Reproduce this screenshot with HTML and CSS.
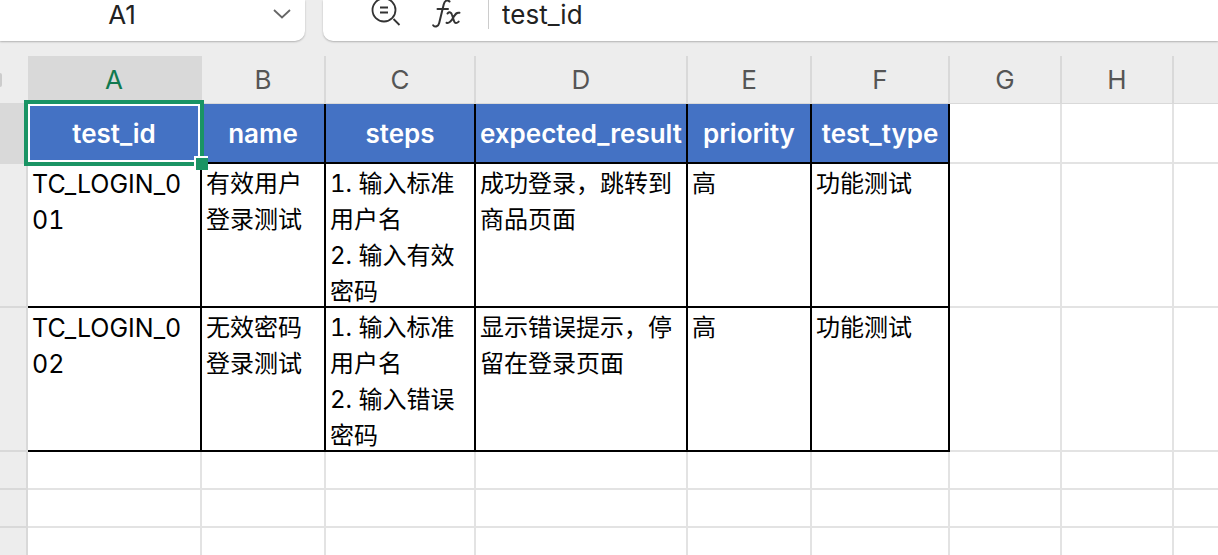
FILE: index.html
```
<!DOCTYPE html>
<html lang="zh-CN">
<head>
    <meta charset="UTF-8">
    <meta name="viewport" content="width=device-width, initial-scale=1.0">
    <title>测试用例</title>
    <link rel="stylesheet" href="styles.css">
</head>
<body>
    <!-- 名称框和编辑栏 -->
    <div class="toolbar">
        <div class="name-box">
            <input type="text" class="name-input" value="A1" aria-label="名称框">
            <button type="button" class="icon-btn" aria-label="展开名称列表">
                <svg width="20" height="12" viewBox="0 0 20 12"><path d="M2 2l8 7.500 8-7.500" fill="none" stroke="#666" stroke-width="1.800"/></svg>
            </button>
        </div>
        <div class="formula-bar">
            <button type="button" class="icon-btn" aria-label="查找">
                <svg width="32" height="32" viewBox="0 0 32 32" fill="none" stroke="#333" stroke-width="1.800">
                    <circle cx="14" cy="12" r="11.500"/>
                    <path d="M10 9.500h8M10 14.500h8M23.500 21l6 6"/>
                </svg>
            </button>
            <button type="button" class="icon-btn" aria-label="插入函数">
                <svg width="32" height="32" viewBox="0 -2 32 32" fill="none" stroke="#333" stroke-width="2" stroke-linecap="round">
                    <path d="M20.500 1.500c-1.500-1.800-4.800-1.500-5.800 3L10.200 23c-.8 3.500-4 4.500-6 2.300M8.500 9h10.500"/>
                    <path d="M18.500 13.500c2-2 3.800-1.200 4.500 1.200l2 6.300c.8 2.600 2.500 2.800 4.700.6M30.500 12.800c-3-.8-4.300 1.500-6 4.400s-3.700 6.800-7 5.600"/>
                </svg>
            </button>
            <input type="text" class="formula-input" value="test_id" aria-label="编辑栏">
        </div>
    </div>

    <table class="sheet">
        <colgroup>
            <col class="col-index">
            <col class="col-a">
            <col class="col-b">
            <col class="col-c">
            <col class="col-d">
            <col class="col-e">
            <col class="col-f">
            <col class="col-g">
            <col class="col-h">
            <col>
        </colgroup>
        <thead>
            <tr>
                <td class="corner"><span class="select-all"></span></td>
                <th class="active">A</th>
                <th>B</th>
                <th>C</th>
                <th>D</th>
                <th>E</th>
                <th>F</th>
                <th>G</th>
                <th>H</th>
                <th></th>
            </tr>
        </thead>
        <tbody>
            <tr class="title-row">
                <th class="index active"></th>
                <td class="title selected">test_id<span class="selection"></span><span class="fill-handle"></span></td>
                <td class="title">name</td>
                <td class="title">steps</td>
                <td class="title">expected_result</td>
                <td class="title">priority</td>
                <td class="title">test_type</td>
                <td></td>
                <td></td>
                <td></td>
            </tr>
            <tr class="data-row">
                <th class="index"></th>
                <td class="data"><div class="cell case-id">TC_LOGIN_001</div></td>
                <td class="data"><div class="cell">有效用户登录测试</div></td>
                <td class="data"><div class="cell">1. 输入标准用户名<br>2. 输入有效密码</div></td>
                <td class="data"><div class="cell">成功登录，跳转到商品页面</div></td>
                <td class="data"><div class="cell">高</div></td>
                <td class="data"><div class="cell">功能测试</div></td>
                <td></td>
                <td></td>
                <td></td>
            </tr>
            <tr class="data-row">
                <th class="index"></th>
                <td class="data"><div class="cell case-id">TC_LOGIN_002</div></td>
                <td class="data"><div class="cell">无效密码登录测试</div></td>
                <td class="data"><div class="cell">1. 输入标准用户名<br>2. 输入错误密码</div></td>
                <td class="data"><div class="cell">显示错误提示，停留在登录页面</div></td>
                <td class="data"><div class="cell">高</div></td>
                <td class="data"><div class="cell">功能测试</div></td>
                <td></td>
                <td></td>
                <td></td>
            </tr>
            <tr class="empty-row">
                <th class="index"></th>
                <td></td><td></td><td></td><td></td><td></td><td></td><td></td><td></td><td></td>
            </tr>
            <tr class="empty-row">
                <th class="index"></th>
                <td></td><td></td><td></td><td></td><td></td><td></td><td></td><td></td><td></td>
            </tr>
            <tr class="empty-row">
                <th class="index"></th>
                <td></td><td></td><td></td><td></td><td></td><td></td><td></td><td></td><td></td>
            </tr>
        </tbody>
    </table>
</body>
</html>
```
FILE: styles.css
```
* {
    margin: 0;
    padding: 0;
    box-sizing: border-box;
}

body {
    font-family: Inter, "Noto Sans CJK SC", sans-serif;
    font-size: 24px;
    color: #000;
    background: #ededed;
    height: 100vh;
    overflow: hidden;
}

/* 顶部工具栏 */
.toolbar {
    display: flex;
    gap: 18px;
    padding-bottom: 15px;
}

.name-box, .formula-bar {
    display: flex;
    align-items: center;
    height: 41px;
    padding-bottom: 13px;
    background: #fff;
    box-shadow: 0 1px 2px rgba(0,0,0,0.25);
}

.name-box {
    width: 305px;
    padding-right: 13px;
    border-radius: 0 0 10px 0;
}

.formula-bar {
    flex: 1;
    gap: 27px;
    padding-left: 47px;
    border-radius: 0 0 0 10px;
}

.name-input, .formula-input {
    min-width: 0;
    flex: 1;
    border: none;
    outline: none;
    background: none;
    font-family: inherit;
    font-size: 26px;
    color: #222;
}

.name-input {
    padding-right: 28px;
    text-align: center;
}

.formula-input {
    height: 30px;
    padding-left: 13px;
    border-left: 1px solid #ccc;
}

.icon-btn {
    display: flex;
    border: none;
    background: none;
    cursor: pointer;
}

/* 表格 */
.sheet {
    width: 100%;
    table-layout: fixed;
    border-collapse: separate;
    border-spacing: 0;
}

.col-index { width: 28px; }
.col-a { width: 174px; }
.col-b { width: 124px; }
.col-c { width: 150px; }
.col-d { width: 212px; }
.col-e { width: 124px; }
.col-f { width: 138px; }
.col-g { width: 112px; }
.col-h { width: 112px; }

.sheet td {
    background: #fff;
    border-right: 2px solid #e3e3e3;
    border-bottom: 2px solid #e3e3e3;
}

.sheet thead th, .sheet .corner {
    height: 48px;
    background: #ededed;
    border-right: 2px solid #d9d9d9;
    border-bottom: 1px solid #d9d9d9;
    font-size: 26px;
    font-weight: 400;
    color: #555;
}

.sheet .corner {
    border-right: none;
}

.sheet tr > :last-child {
    border-right: none;
}

.sheet thead .active {
    background: #d9d9d9;
    color: #10794f;
}

.select-all {
    display: block;
    width: 2px;
    height: 14px;
    border-radius: 0 4px 4px 0;
    background: #ccc;
}

.index {
    background: #ededed;
    border-right: 2px solid #d9d9d9;
    border-bottom: 2px solid #d9d9d9;
}

.index.active {
    background: #d9d9d9;
}

.title-row { height: 60px; }
.data-row { height: 144px; }
.empty-row { height: 38px; }

.sheet .title {
    background: #4472c4;
    border-color: #000;
    color: #fff;
    font-size: 26px;
    font-weight: 600;
    text-align: center;
    white-space: nowrap;
}

.sheet .data {
    border-color: #000;
    vertical-align: top;
}

.cell {
    height: 142px;
    padding: 2px 14px 0 4px;
    line-height: 36px;
    font-variant-numeric: tabular-nums;
    word-break: break-all;
    overflow: hidden;
}

.case-id {
    font-size: 25px;
}

/* 选中单元格 */
.selected {
    position: relative;
}

.selection {
    position: absolute;
    inset: -4px;
    border: 4px solid #1a9464;
    box-shadow: inset 0 0 0 2px #fff;
}

.fill-handle {
    position: absolute;
    right: -8px;
    bottom: -8px;
    width: 14px;
    height: 14px;
    background: #1a9464;
    border-top: 2px solid #fff;
    border-left: 2px solid #fff;
}
```
